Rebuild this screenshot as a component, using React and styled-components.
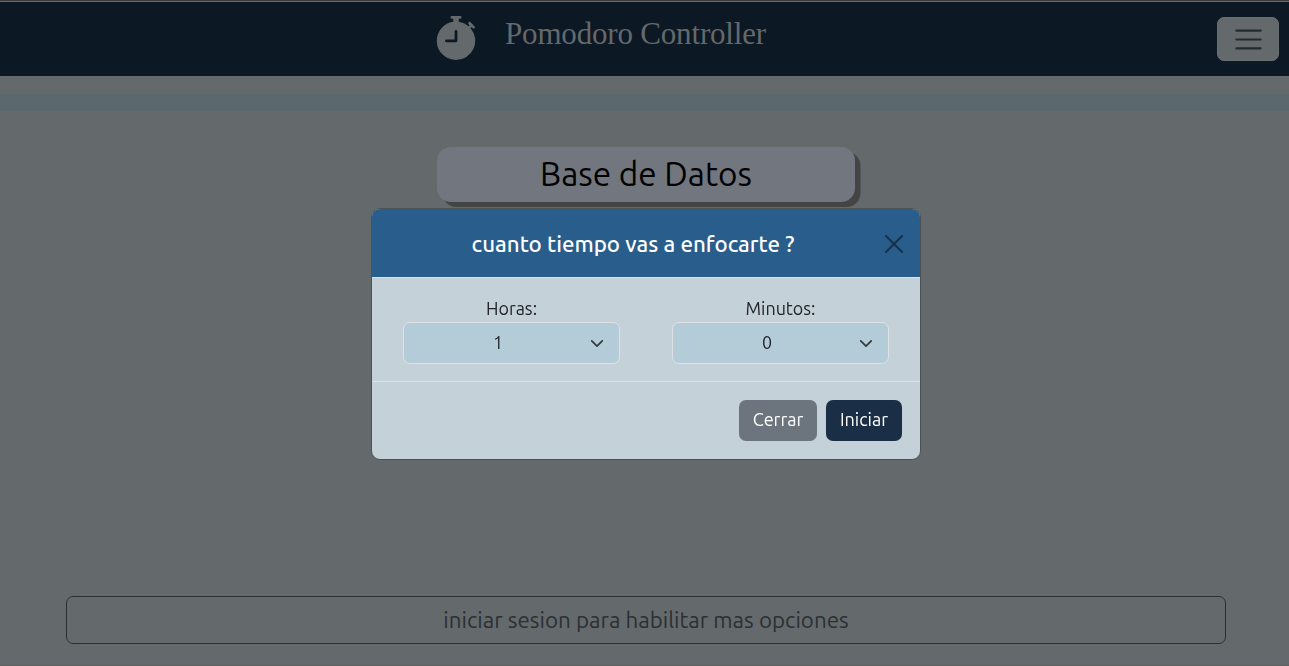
import React from "react";
import styled, { createGlobalStyle } from "styled-components";
import { BsStopwatchFill } from "react-icons/bs";

const GlobalStyle = createGlobalStyle`
  * { box-sizing: border-box; }
  body {
    margin: 0;
    background: #64696c;
    font-family: Ubuntu, "Noto Sans", sans-serif;
    overflow: hidden;
  }
`;

const Page = styled.div`
  height: 666px;
  display: flex;
  flex-direction: column;
  border-top: 1px solid #3c3a3b;
  border-bottom: 1px solid #605f62;
`;

const Navbar = styled.header`
  height: 75px;
  flex: none;
  display: grid;
  grid-template-columns: 434px 44px 1fr auto;
  padding-right: 10px;
  border-top: 1px solid #66686b;
  background: #0c1824;
  color: #64696c;
`;

const Logo = styled(BsStopwatchFill)`
  grid-column: 2;
  width: 44px;
  height: 44px;
  margin-top: 14px;
`;

const Brand = styled.h1`
  margin: 13px 0 0 27px;
  font: 400 31px/37px "Liberation Serif", serif;
  letter-spacing: -0.18px;
  white-space: nowrap;
`;

const MenuButton = styled.button`
  width: 62px;
  height: 44px;
  margin-top: 15px;
  padding: 0 0 0 1px;
  display: grid;
  place-items: center;
  border: 1px solid #6a6f72;
  border-radius: 7px;
  background: #64696c;
`;

const Strip = styled.div`
  height: 17px;
  flex: none;
  margin-top: 18px;
  background: #5b686d;
`;

const Subject = styled.h2`
  width: 418px;
  height: 55px;
  flex: none;
  margin: 36px 0 0 437px;
  border-radius: 14px;
  background: #72777f;
  box-shadow: 5.5px 5px 0 #444;
  color: #000;
  font-size: 33.3px;
  font-weight: 400;
  line-height: 54px;
  text-align: center;
`;

const LoginNotice = styled.button`
  height: 48px;
  flex: none;
  margin: auto 63px 21px 66px;
  padding: 0 0 2px;
  border: 1px solid #2b3033;
  border-radius: 7px;
  background: transparent;
  color: #2b3033;
  font-family: inherit;
  font-size: 22.35px;
`;

const Overlay = styled.div`
  position: fixed;
  inset: 0;
  display: flex;
  align-items: flex-start;
  padding: 208px 0 0 371px;
`;

const Dialog = styled.section`
  width: 550px;
  height: 252px;
  display: flex;
  flex-direction: column;
  border: 1px solid #4c5257;
  border-radius: 9px;
  background: #c5d1d9;
  color: #212529;
  overflow: hidden;
`;

const DialogHeader = styled.div`
  height: 69px;
  flex: none;
  display: flex;
  align-items: center;
  padding: 1px 17px 0 9px;
  border-bottom: 1px solid #dee2e6;
  background: #285d8c;
`;

const DialogTitle = styled.h3`
  flex: 1;
  margin: 0;
  padding-bottom: 1px;
  color: #fff;
  font-size: 22.3px;
  font-weight: 500;
  text-align: center;
  white-space: nowrap;
`;

const CloseButton = styled.button`
  width: 18px;
  height: 18px;
  padding: 0;
  display: block;
  border: 0;
  background: none;

  svg { display: block; }
`;

const DialogBody = styled.div`
  height: 104px;
  flex: none;
  display: flex;
  gap: 52px;
  padding: 19px 31px 0;
  border-bottom: 1px solid #dee2e6;
`;

const Field = styled.label`
  width: 217px;
  display: flex;
  flex-direction: column;
  font-size: 17.9px;
  line-height: 24px;
  text-align: center;
`;

const FieldLabel = styled.span`
  height: 25px;
  line-height: 23px;
`;

const SelectBox = styled.span`
  height: 42px;
  display: flex;
  align-items: center;
  padding: 0 15px 0 0;
  border: 1px solid #dee2e6;
  border-radius: 7px;
  background: #b4ccd8;
`;

const SelectValue = styled.span`
  flex: 1;
  padding: 0 0 3px 2px;
`;

const DialogFooter = styled.div`
  display: flex;
  justify-content: flex-end;
  gap: 9px;
  padding: 18px 18px 0;
`;

const Button = styled.button`
  width: ${(p) => p.$width}px;
  height: 41px;
  padding: 0 0 4px;
  border: 0;
  border-radius: 7px;
  background: ${(p) => (p.$primary ? "#1a2f45" : "#6c757d")};
  color: #fff;
  font-family: inherit;
  font-size: 18px;
`;

function SelectField({ label, value }) {
  return (
    <Field>
      <FieldLabel>{label}</FieldLabel>
      <SelectBox>
        <SelectValue>{value}</SelectValue>
        <svg width="14" height="14" viewBox="0 0 16 16" fill="none" stroke="#343a40" strokeWidth="2" strokeLinecap="round" strokeLinejoin="round">
          <path d="m2 5.5 6 6 6-6" />
        </svg>
      </SelectBox>
    </Field>
  );
}

export default function App() {
  return (
    <>
      <GlobalStyle />
      <Page>
        <Navbar>
          <Logo />
          <Brand>Pomodoro Controller</Brand>
          <MenuButton aria-label="Menu">
            <svg width="33" height="33" viewBox="0 0 30 30" fill="none" stroke="#272b2e" strokeWidth="2" strokeLinecap="round">
              <path d="M4 7h22M4 15h22M4 23h22" />
            </svg>
          </MenuButton>
        </Navbar>
        <Strip />
        <Subject>Base de Datos</Subject>
        <LoginNotice>iniciar sesion para habilitar mas opciones</LoginNotice>
      </Page>
      <Overlay>
        <Dialog role="dialog">
          <DialogHeader>
            <DialogTitle>cuanto tiempo vas a enfocarte ?</DialogTitle>
            <CloseButton aria-label="Cerrar">
              <svg width="18" height="18" viewBox="0 0 18 18" fill="none" stroke="#183149" strokeWidth="2" strokeLinecap="round">
                <path d="m1 1 16 16M17 1 1 17" />
              </svg>
            </CloseButton>
          </DialogHeader>
          <DialogBody>
            <SelectField label="Horas:" value="1" />
            <SelectField label="Minutos:" value="0" />
          </DialogBody>
          <DialogFooter>
            <Button $width={78}>Cerrar</Button>
            <Button $width={76} $primary>Iniciar</Button>
          </DialogFooter>
        </Dialog>
      </Overlay>
    </>
  );
}
